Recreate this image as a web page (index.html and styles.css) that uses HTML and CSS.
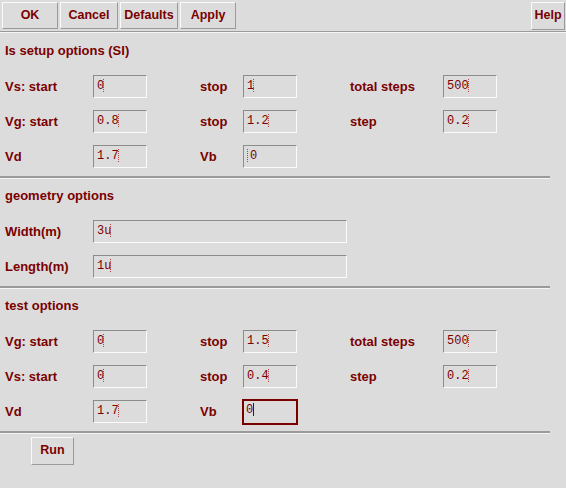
FILE: index.html
```
<!DOCTYPE html>
<html>
<head>
<meta charset="utf-8">
<title>Is setup</title>
<link rel="stylesheet" href="styles.css">
</head>
<body>
<div class="toolbar">
  <div class="btn w56">OK</div>
  <div class="btn w58">Cancel</div>
  <div class="btn w58">Defaults</div>
  <div class="btn w56">Apply</div>
  <div class="btn help">Help</div>
</div>

<div class="section">
  <div class="title">Is setup options (SI)</div>
  <div class="grid">
    <span class="lbl">Vs: start</span><div class="field">0<i class="mk"></i></div>
    <span class="lbl">stop</span><div class="field">1<i class="mk"></i></div>
    <span class="lbl">total steps</span><div class="field">500<i class="mk"></i></div>

    <span class="lbl">Vg: start</span><div class="field">0.8<i class="mk"></i></div>
    <span class="lbl">stop</span><div class="field">1.2<i class="mk"></i></div>
    <span class="lbl">step</span><div class="field">0.2<i class="mk"></i></div>

    <span class="lbl">Vd</span><div class="field">1.7<i class="mk"></i></div>
    <span class="lbl">Vb</span><div class="field"><i class="mk pre"></i>0</div>
  </div>
</div>

<div class="section">
  <div class="title">geometry options</div>
  <div class="grid wide">
    <span class="lbl">Width(m)</span><div class="field long">3u<i class="mk"></i></div>
    <span class="lbl">Length(m)</span><div class="field long">1u<i class="mk"></i></div>
  </div>
</div>

<div class="section">
  <div class="title">test options</div>
  <div class="grid">
    <span class="lbl">Vg: start</span><div class="field">0<i class="mk"></i></div>
    <span class="lbl">stop</span><div class="field">1.5<i class="mk"></i></div>
    <span class="lbl">total steps</span><div class="field">500<i class="mk"></i></div>

    <span class="lbl">Vs: start</span><div class="field">0<i class="mk"></i></div>
    <span class="lbl">stop</span><div class="field">0.4<i class="mk"></i></div>
    <span class="lbl">step</span><div class="field">0.2<i class="mk"></i></div>

    <span class="lbl">Vd</span><div class="field">1.7<i class="mk"></i></div>
    <span class="lbl">Vb</span><div class="field focus">0<i class="caret"></i></div>
  </div>
</div>

<div class="bottom">
  <div class="btn run">Run</div>
</div>
</body>
</html>
```

FILE: styles.css
```
*{margin:0;padding:0;box-sizing:border-box;}
body{background:#dcdcdc;color:#7a0000;font-family:"Liberation Sans",Arial,sans-serif;font-weight:bold;font-size:13px;width:566px;height:488px;overflow:hidden;}

.toolbar{display:flex;gap:2px;padding:2px 1px 0 2px;height:33px;border-bottom:1px solid #f4f4f4;box-shadow:inset 0 -1px 0 #9a9a9a;}
.btn{height:27px;line-height:25px;text-align:center;font-size:12.5px;border:1px solid;border-color:#fafafa #9a9a9a #9a9a9a #fafafa;}
.w56{width:56px;}
.w58{width:58px;}
.help{width:34px;height:28px;margin-left:auto;}

.section{width:550px;padding:8px 0 8px 5px;border-bottom:2px solid #9a9a9a;box-shadow:0 1px 0 #f4f4f4;}
.title{height:20px;line-height:20px;margin-bottom:14px;}
.grid{display:grid;grid-template-columns:88px 107px 43px 107px 93px 54px;grid-auto-rows:23px;row-gap:12px;align-items:center;}
.grid .field{width:54px;}
.wide{grid-template-columns:88px 254px;}
.grid .field.long{width:254px;}

.field{height:23px;padding:2px 3px;font-family:"Liberation Mono","Courier New",monospace;font-weight:normal;font-size:12px;line-height:16px;color:#7a0000;border:1px solid;border-color:#8c8c8c #fbfbfb #fbfbfb #8c8c8c;white-space:nowrap;}
.mk{display:inline-block;width:2px;height:13px;vertical-align:-3px;margin-left:-1px;border-left:1px dotted #c04040;}
.mk.pre{margin:0 1px 0 0;}
.focus{border:2px solid #7a0000;outline:1px solid #7a0000;outline-offset:-1px;padding:1px 2px;height:26px;width:56px !important;margin-left:-1px;}
.caret{display:inline-block;width:1px;height:13px;vertical-align:-3px;background:#7a0000;}

.bottom{padding:4px 0 0 31px;}
.run{width:43px;height:28px;}
```
